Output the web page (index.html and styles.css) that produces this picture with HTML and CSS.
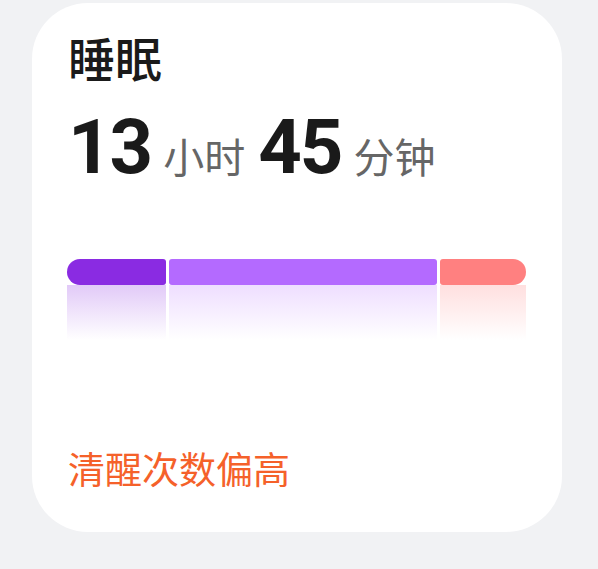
FILE: index.html
```html
<!DOCTYPE html>
<html lang="zh-CN">
<head>
  <meta charset="UTF-8" />
  <meta name="viewport" content="width=device-width, initial-scale=1.0"/>
  <title>睡眠</title>
  <link rel="stylesheet" href="styles.css">
</head>
<body>
  <div class="sleep-card">
    <h1 class="title">睡眠</h1>

    <div class="duration">
      <span class="num">13</span>
      <span class="unit">小时</span>
      <span class="num">45</span>
      <span class="unit">分钟</span>
    </div>

    <div class="stages">
      <div class="stage deep" style="width: 99px"><div class="bar"></div><div class="fade"></div></div>
      <div class="stage light" style="width: 268px"><div class="bar"></div><div class="fade"></div></div>
      <div class="stage awake" style="width: 86px"><div class="bar"></div><div class="fade"></div></div>
    </div>

    <p class="note">清醒次数偏高</p>
  </div>
</body>
</html>
```

FILE: styles.css
```css
body {
  margin: 0;
  background: #f1f2f4;
  font-family: Roboto, 'Noto Sans CJK SC', sans-serif;
}

.sleep-card {
  width: 530px;
  height: 529px;
  box-sizing: border-box;
  margin: 3px 0 0 32px;
  padding: 28px 36px 0 36px;
  background: #fff;
  border-radius: 56px;
  display: flex;
  flex-direction: column;
}

.title {
  margin: 0;
  font-size: 47px;
  font-weight: 500;
  line-height: 60px;
  color: #1a1a1a;
}

.duration {
  display: flex;
  align-items: baseline;
  margin-top: 11px;
  line-height: 90px;
}

.num {
  font-size: 76px;
  font-weight: 700;
  letter-spacing: -2px;
  color: #1a1a1a;
  margin-right: 12px;
}

.unit {
  font-size: 41px;
  color: #666;
  margin-right: 13px;
}

.stages {
  display: flex;
  gap: 3px;
  margin-top: 55px;
  margin-left: -1px;
}

.bar {
  height: 26px;
  border-radius: 3px;
}

.fade {
  height: 55px;
}

.deep .bar {
  background: #8a2be2;
  border-radius: 13px 3px 3px 13px;
}

.deep .fade {
  background: linear-gradient(rgba(138, 43, 226, 0.25), rgba(138, 43, 226, 0));
}

.light .bar {
  background: #b46aff;
}

.light .fade {
  background: linear-gradient(rgba(180, 106, 255, 0.22), rgba(180, 106, 255, 0));
}

.awake .bar {
  background: #ff8080;
  border-radius: 3px 13px 13px 3px;
}

.awake .fade {
  background: linear-gradient(rgba(255, 128, 128, 0.25), rgba(255, 128, 128, 0));
}

.note {
  margin: auto 0 38px 0;
  font-size: 37px;
  line-height: 44px;
  color: #f5612a;
}
```
